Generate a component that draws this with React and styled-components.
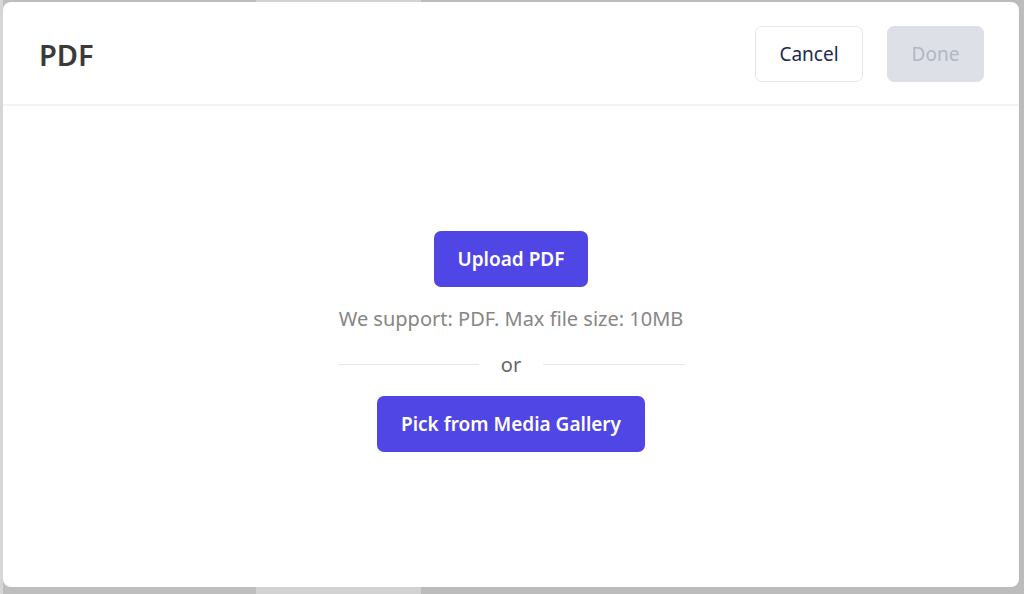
import React from "react";
import styled, { createGlobalStyle } from "styled-components";

const Global = createGlobalStyle`
  html, body { margin: 0; padding: 0; }
  body { font-family: "Noto Sans", "Open Sans", sans-serif; background: #c9c9c9; }
`;

const Backdrop = styled.div`
  width: 1024px;
  height: 594px;
  box-sizing: border-box;
  padding: 2px 5px 7px 3px;
  background: linear-gradient(90deg, #d6d6d6 0, #d6d6d6 3px, #bebebe 3px, #bebebe 256px, #d2d2d2 256px, #d2d2d2 421px, #bcbcbc 421px);
  display: flex;
`;

const Modal = styled.div`
  flex: 1;
  background: #fff;
  border-radius: 8px;
  display: flex;
  flex-direction: column;
  overflow: hidden;
`;

const Header = styled.header`
  height: 104px;
  box-sizing: border-box;
  display: flex;
  align-items: center;
  justify-content: space-between;
  padding: 2px 35px 0 36px;
  border-bottom: 2px solid #f3f3f4;
`;

const Title = styled.h1`
  margin: 0;
  font-size: 29px;
  font-weight: 600;
  color: #3a3a3a;
`;

const Actions = styled.div`
  display: flex;
  gap: 24px;
`;

const HeaderButton = styled.button`
  width: ${(p) => p.$w}px;
  height: 56px;
  padding: 0;
  border-radius: 7px;
  font-family: inherit;
  font-size: 19px;
  border: 1px solid ${(p) => (p.$disabled ? "#dde0e7" : "#e6e7ea")};
  background: ${(p) => (p.$disabled ? "#dde0e7" : "#fff")};
  color: ${(p) => (p.$disabled ? "#b2b7c4" : "#1f2a4d")};
  cursor: ${(p) => (p.$disabled ? "default" : "pointer")};
`;

const Body = styled.main`
  flex: 1;
  display: flex;
  flex-direction: column;
  align-items: center;
  padding-top: 125px;
`;

const PrimaryButton = styled.button`
  height: 56px;
  padding: 0 24px;
  border: none;
  border-radius: 7px;
  background: #4f46e5;
  color: #fff;
  font-family: inherit;
  font-size: 19px;
  font-weight: 600;
  cursor: pointer;
`;

const Hint = styled.p`
  margin: 18px 0 0;
  font-size: 20px;
  line-height: 27px;
  color: #868686;
`;

const OrRow = styled.div`
  width: 347px;
  margin-top: 19px;
  display: flex;
  align-items: center;
  gap: 22px;
  font-size: 20px;
  line-height: 27px;
  color: #666;
`;

const Line = styled.span`
  flex: 1;
  height: 1px;
  background: #e6e6e6;
`;

const SecondRow = styled.div`
  margin-top: 18px;
`;

export default function App() {
  return (
    <>
      <Global />
      <Backdrop>
        <Modal>
          <Header>
            <Title>PDF</Title>
            <Actions>
              <HeaderButton $w={108}>Cancel</HeaderButton>
              <HeaderButton $disabled $w={97}>Done</HeaderButton>
            </Actions>
          </Header>
          <Body>
            <PrimaryButton>Upload PDF</PrimaryButton>
            <Hint>We support: PDF. Max file size: 10MB</Hint>
            <OrRow>
              <Line />
              or
              <Line />
            </OrRow>
            <SecondRow>
              <PrimaryButton>Pick from Media Gallery</PrimaryButton>
            </SecondRow>
          </Body>
        </Modal>
      </Backdrop>
    </>
  );
}
